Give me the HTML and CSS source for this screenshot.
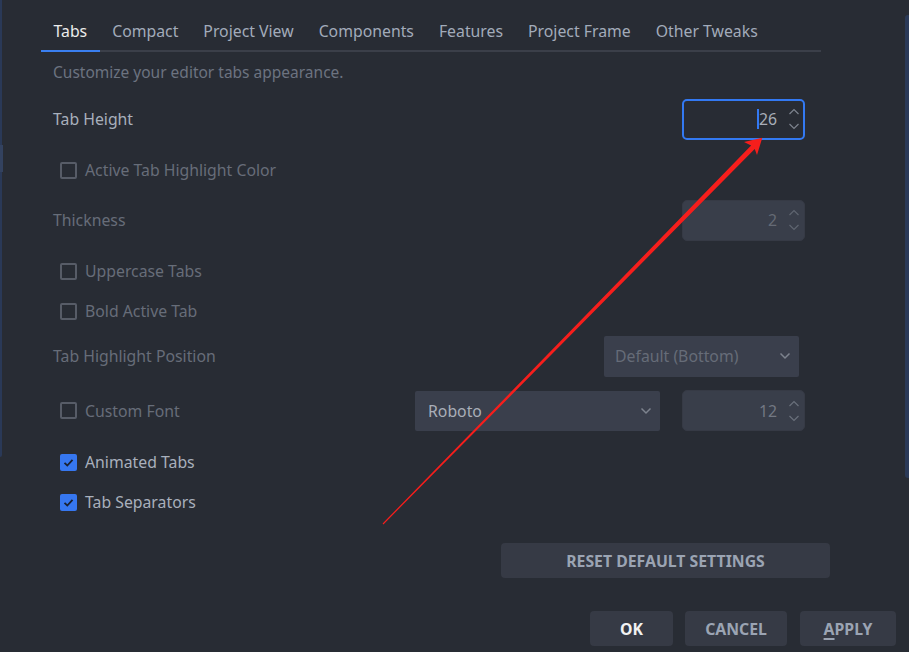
FILE: index.html
```
<!DOCTYPE html>
<html>
<head>
<meta charset="utf-8">
<link rel="stylesheet" href="styles.css">
</head>
<body>
<div class="edge-left"><div class="edge-left-hi"></div></div>
<div class="edge-right"></div>
<div class="panel">
  <div class="tabs">
    <div class="tab active">Tabs</div>
    <div class="tab">Compact</div>
    <div class="tab">Project View</div>
    <div class="tab">Components</div>
    <div class="tab">Features</div>
    <div class="tab">Project Frame</div>
    <div class="tab">Other Tweaks</div>
  </div>
</div>
<div class="form">
  <div class="desc">Customize your editor tabs appearance.</div>

  <div class="row field-row mt14">
    <span class="label">Tab Height</span>
    <div class="spin focus">
      <span class="caret"></span><span class="value">26</span>
      <svg class="arrows" width="12" height="24" viewBox="0 0 12 24"><path d="M1.5 7 L6 2.5 L10.5 7 M1.5 17 L6 21.5 L10.5 17" fill="none" stroke="#7d838e" stroke-width="1.2"/></svg>
    </div>
  </div>

  <div class="row check-row mt10">
    <span class="box"></span><span class="label dim">Active Tab Highlight Color</span>
  </div>

  <div class="row field-row mt9">
    <span class="label dim">Thickness</span>
    <div class="spin disabled">
      <span class="value">2</span>
      <svg class="arrows" width="12" height="24" viewBox="0 0 12 24"><path d="M1.5 7 L6 2.5 L10.5 7 M1.5 17 L6 21.5 L10.5 17" fill="none" stroke="#5f6570" stroke-width="1.2"/></svg>
    </div>
  </div>

  <div class="row check-row mt10">
    <span class="box"></span><span class="label dim">Uppercase Tabs</span>
  </div>

  <div class="row check-row">
    <span class="box"></span><span class="label dim">Bold Active Tab</span>
  </div>

  <div class="row field-row mt4">
    <span class="label dim">Tab Highlight Position</span>
    <div class="select pos">
      <span class="sel-text dim">Default (Bottom)</span>
      <svg width="12" height="8" viewBox="0 0 12 8"><path d="M1.5 1.5 L6 6 L10.5 1.5" fill="none" stroke="#7d838e" stroke-width="1.5"/></svg>
    </div>
  </div>

  <div class="row field-row check-field mt13">
    <span class="box"></span><span class="label dim">Custom Font</span>
    <div class="select font">
      <span class="sel-text">Roboto</span>
      <svg width="12" height="8" viewBox="0 0 12 8"><path d="M1.5 1.5 L6 6 L10.5 1.5" fill="none" stroke="#7d838e" stroke-width="1.5"/></svg>
    </div>
    <div class="spin disabled size">
      <span class="value mid">12</span>
      <svg class="arrows" width="12" height="24" viewBox="0 0 12 24"><path d="M1.5 7 L6 2.5 L10.5 7 M1.5 17 L6 21.5 L10.5 17" fill="none" stroke="#6a707b" stroke-width="1.2"/></svg>
    </div>
  </div>

  <div class="row check-row mt11">
    <span class="box checked"><svg width="13" height="13" viewBox="0 0 13 13"><path d="M2.5 6.8 L5.3 9.5 L10.5 3.8" fill="none" stroke="#1a2130" stroke-width="1.8"/></svg></span><span class="label">Animated Tabs</span>
  </div>

  <div class="row check-row">
    <span class="box checked"><svg width="13" height="13" viewBox="0 0 13 13"><path d="M2.5 6.8 L5.3 9.5 L10.5 3.8" fill="none" stroke="#1a2130" stroke-width="1.8"/></svg></span><span class="label">Tab Separators</span>
  </div>

  <div class="reset-wrap">
    <button class="btn reset">RESET DEFAULT SETTINGS</button>
  </div>
</div>

<div class="actions">
  <button class="btn ok">OK</button>
  <button class="btn cancel">CANCEL</button>
  <button class="btn apply"><u>A</u>PPLY</button>
</div>

<svg class="annot" width="909" height="652" viewBox="0 0 909 652">
  <polygon points="382.6,523.6 751.1,145.6 744,142 762.3,137.7 757,155 754.7,149 383.4,524.4" fill="#f61e1c"/>
</svg>
</body>
</html>
```
FILE: styles.css
```
html, body {
  margin: 0;
  padding: 0;
}
body {
  width: 909px;
  height: 652px;
  overflow: hidden;
  position: relative;
  background: #282c34;
  font-family: "Noto Sans", "Open Sans", sans-serif;
  font-size: 15.8px;
  color: #a9b0bc;
}
.edge-left {
  position: absolute;
  left: 0;
  top: 0;
  width: 2px;
  height: 457px;
  background: #2a3957;
  border-bottom-right-radius: 2px;
}
.edge-left-hi {
  margin-top: 145px;
  height: 27px;
  width: 3px;
  background: #33425f;
}
.edge-right {
  position: absolute;
  right: 0;
  top: 15px;
  width: 4px;
  height: 463px;
  background: #2b3a58;
  border-radius: 3px 0 0 3px;
}
.panel {
  padding: 16px 0 0 41px;
  width: 780px;
}
.tabs {
  display: flex;
  border-bottom: 2px solid #3b3f49;
  height: 34px;
}
.tab {
  padding: 0 12.5px;
  height: 34px;
  line-height: 30px;
  color: #a2abba;
  box-sizing: border-box;
}
.tab.active {
  color: #ececec;
  border-bottom: 2px solid #3a7ff0;
  height: 36px;
}
.form {
  padding-left: 53px;
  width: 752px;
  display: flex;
  flex-direction: column;
}
.desc {
  margin-top: 8px;
  height: 24px;
  line-height: 24px;
  color: #6c7380;
  font-size: 15.5px;
}
.row {
  display: flex;
  align-items: center;
}
.field-row {
  height: 42px;
  justify-content: space-between;
}
.check-row {
  height: 40px;
  padding-left: 7px;
}
.check-field {
  padding-left: 7px;
  justify-content: flex-start;
  height: 41px;
}
.mt4 { margin-top: 4px; }
.mt9 { margin-top: 9px; }
.mt10 { margin-top: 10px; }
.mt11 { margin-top: 11px; }
.mt13 { margin-top: 13px; }
.mt14 { margin-top: 14px; }
.label.dim, .dim {
  color: #676d79;
}
.box {
  width: 17px;
  height: 17px;
  box-sizing: border-box;
  border: 2px solid #575c67;
  border-radius: 2px;
  margin-right: 8px;
  flex: none;
  display: flex;
  align-items: center;
  justify-content: center;
}
.box.checked {
  background: #3677f0;
  border-color: #3677f0;
}
.spin {
  width: 123px;
  height: 41px;
  box-sizing: border-box;
  border-radius: 5px;
  display: flex;
  align-items: center;
  justify-content: flex-end;
  padding-right: 5px;
  position: relative;
}
.spin.focus {
  border: 2px solid #3379f2;
  padding-right: 3px;
  height: 41px;
}
.spin.disabled {
  background: #393e4a;
  border: 1px solid #363a45;
  padding-right: 4px;
}
.spin .value {
  margin-right: 11px;
  color: #a9aeb8;
  line-height: 20px;
}
.spin.disabled .value {
  color: #656a75;
}
.spin.disabled .value.mid {
  color: #737883;
}
.caret {
  width: 2px;
  height: 20px;
  background: #3379f2;
  margin-right: 0;
}
.arrows {
  flex: none;
}
.select {
  height: 40px;
  box-sizing: border-box;
  background: #3a3f4c;
  border-radius: 2px;
  display: flex;
  align-items: center;
  justify-content: space-between;
  padding: 0 8px 0 11px;
}
.select.pos {
  width: 195px;
  margin-right: 6px;
  height: 41px;
}
.select.font {
  width: 245px;
  margin-left: auto;
  margin-right: 22px;
  padding-left: 13px;
}
.sel-text {
  color: #a9aeb8;
}
.sel-text.dim {
  color: #666c78;
}
.btn {
  font-family: "Noto Sans", "Open Sans", sans-serif;
  font-weight: bold;
  font-size: 15.8px;
  border: none;
  background: #363a45;
  color: #9ba4b3;
  border-radius: 4px;
  height: 35px;
  padding: 0;
  cursor: pointer;
}
.reset-wrap {
  display: flex;
  justify-content: flex-end;
  margin-top: 21px;
  margin-right: -25px;
}
.reset {
  width: 329px;
}
.actions {
  display: flex;
  justify-content: flex-end;
  gap: 12px;
  margin-top: 33px;
  margin-right: 13px;
}
.ok {
  width: 83px;
  color: #f2f2f2;
}
.cancel {
  width: 102px;
}
.apply {
  width: 96px;
  margin-left: 1px;
}
.apply u {
  text-decoration-thickness: 2px;
  text-underline-offset: 3px;
}
.annot {
  position: absolute;
  left: 0;
  top: 0;
  pointer-events: none;
}
```
